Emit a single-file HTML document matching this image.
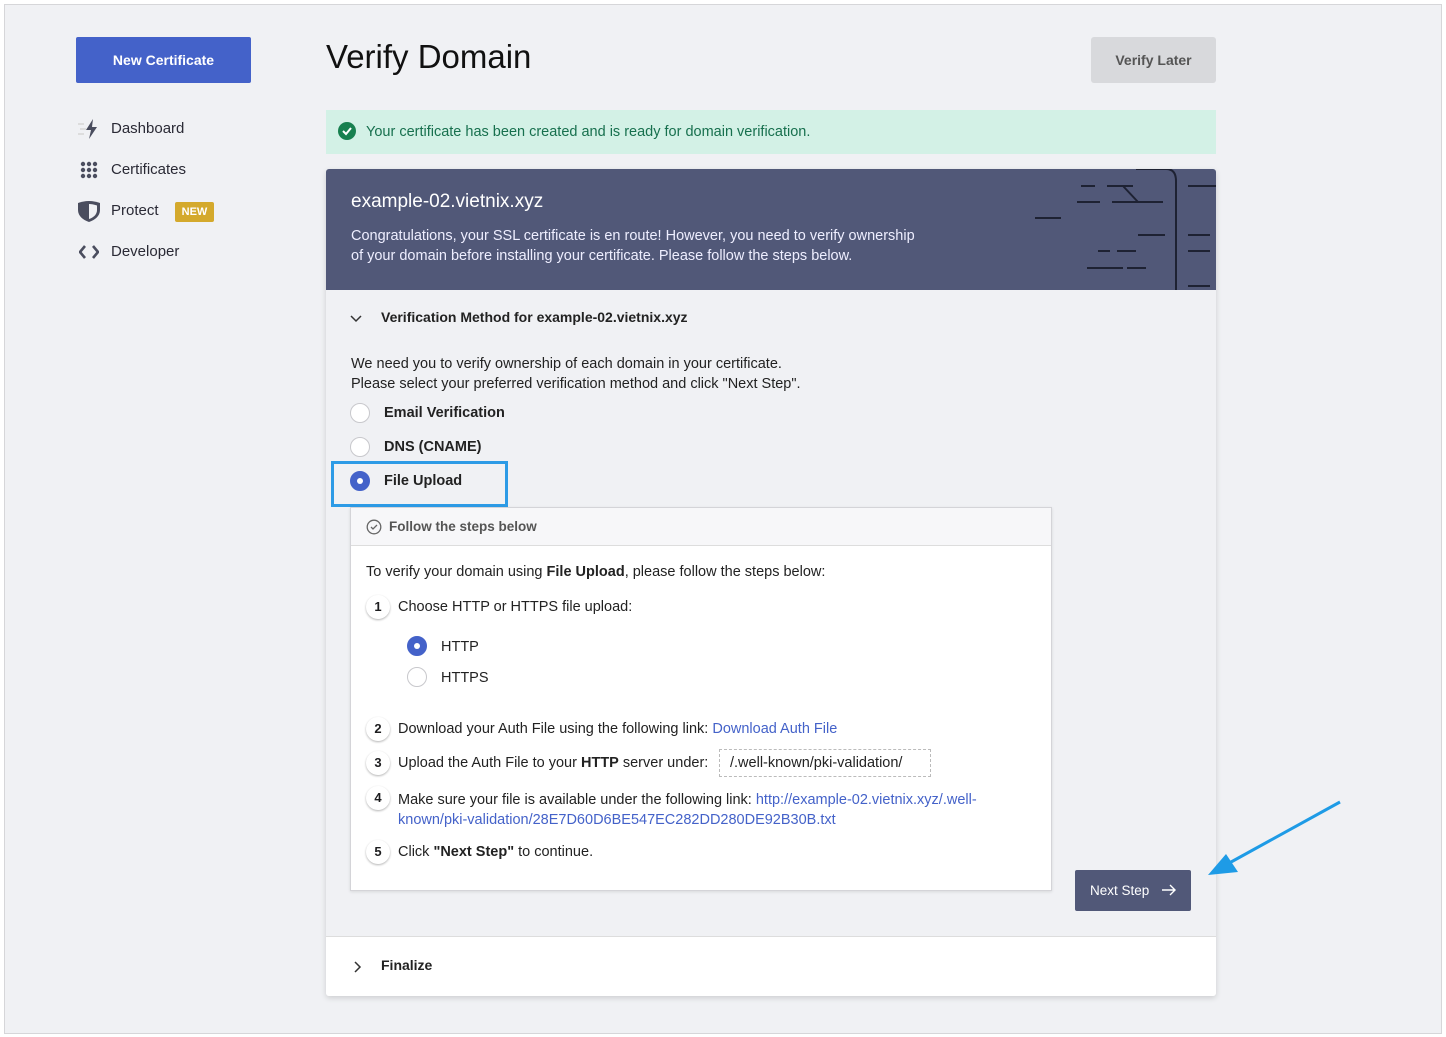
<!DOCTYPE html>
<html><head><meta charset="utf-8"><style>
*{box-sizing:border-box;margin:0;padding:0}
body{width:1446px;height:1037px;background:#fff;font-family:"Liberation Sans",sans-serif;color:#1d1d1f;position:relative;overflow:hidden}
.frame{position:absolute;left:4px;top:4px;width:1438px;height:1030px;background:#f0f1f4;border:1px solid #d6d6d9}
.a{position:absolute}
.btn1{left:76px;top:37px;width:175px;height:46px;background:#4462c9;color:#fff;font-weight:bold;font-size:14px;border-radius:2px;text-align:center;line-height:46px}
.nav{left:111px;font-size:15px;color:#2a2a35}
h1{position:absolute;left:326px;top:38px;font-size:33px;font-weight:normal;color:#111}
.vl{left:1091px;top:37px;width:125px;height:46px;background:#d8d9dc;color:#555;border-radius:3px;font-weight:bold;font-size:14px;text-align:center;line-height:46px}
.ok{left:326px;top:110px;width:890px;height:44px;background:#d3f1e6;color:#17704e;font-size:14.5px;line-height:44px;padding-left:40px}
.card{left:326px;top:169px;width:890px;height:827px;background:#f0f1f4;box-shadow:0 2px 6px rgba(0,0,0,.15);border-radius:3px;overflow:hidden}
.hd{position:absolute;left:0;top:0;width:890px;height:121px;background:#515878;color:#fff}
.fin{position:absolute;left:0;top:767px;width:890px;height:60px;background:#fff;border-top:1px solid #ddd}
.t{font-size:14.5px;color:#222}
.radio{position:absolute;width:20px;height:20px;border-radius:50%;background:#fff;border:1px solid #c8c8cc}
.radio.on{background:#4462c9;border-color:#4462c9}
.radio.on:after{content:"";position:absolute;left:6px;top:6px;width:6px;height:6px;border-radius:50%;background:#fff}
.box{left:350px;top:507px;width:702px;height:384px;background:#fff;border:1px solid #d4d4d8;box-shadow:0 1px 3px rgba(0,0,0,.1)}
.bh{height:38px;background:#f7f7f9;border-bottom:1px solid #ddd;font-size:13.5px;color:#555;font-weight:bold;line-height:37px;padding-left:38px;position:relative}
.n{position:absolute;left:366px;width:24px;height:24px;border-radius:50%;background:#fff;box-shadow:0 1px 2px rgba(0,0,0,.3);font-size:13px;font-weight:bold;text-align:center;line-height:24px}
.lk{color:#4462c9}
</style></head><body>
<div class="frame"></div>
<div class="a btn1">New Certificate</div>
<svg class="a" style="left:78px;top:119px" width="24" height="20" viewBox="0 0 24 20"><path d="M0 5h6M2 10h6M0 15h6" stroke="#ddd" stroke-width="2"/><path d="M15 0L8 11h5l-2 9 8-12h-5z" fill="#4a4d5e"/></svg>
<div class="a nav" style="top:120px">Dashboard</div>
<svg class="a" style="left:80px;top:161px" width="19" height="19"><g fill="#4a4d5e"><circle cx="3" cy="3" r="2.2"/><circle cx="9" cy="3" r="2.2"/><circle cx="15" cy="3" r="2.2"/><circle cx="3" cy="9" r="2.2"/><circle cx="9" cy="9" r="2.2"/><circle cx="15" cy="9" r="2.2"/><circle cx="3" cy="15" r="2.2"/><circle cx="9" cy="15" r="2.2"/><circle cx="15" cy="15" r="2.2"/></g></svg>
<div class="a nav" style="top:161px">Certificates</div>
<svg class="a" style="left:77px;top:200px" width="24" height="23" viewBox="0 0 24 23"><path d="M12 1C8 1 4 2 1 3v7c0 6 5 10 11 12 6-2 11-6 11-12V3c-3-1-7-2-11-2z" fill="#4a4d5e"/><path d="M12 4c2.5 0 5 .5 8 1.5V10c0 4-3 7.5-8 9z" fill="#f0f1f4"/></svg>
<div class="a nav" style="top:202px">Protect</div>
<div class="a" style="left:175px;top:202px;width:39px;height:20px;background:#d4a92c;color:#fff;font-size:11px;font-weight:bold;border-radius:2px;text-align:center;line-height:20px">NEW</div>
<svg class="a" style="left:79px;top:244px" width="20" height="16"><path d="M6 2L1 8l5 6M14 2l5 6-5 6" stroke="#4a4d5e" stroke-width="2.6" fill="none"/></svg>
<div class="a nav" style="top:243px">Developer</div>
<h1>Verify Domain</h1>
<div class="a vl">Verify Later</div>
<div class="a ok">Your certificate has been created and is ready for domain verification.</div>
<svg class="a" style="left:337px;top:121px" width="20" height="20"><circle cx="10" cy="10" r="9" fill="#17804f"/><path d="M6 10l3 3 5-6" stroke="#fff" stroke-width="2" fill="none"/></svg>
<div class="a card">
 <div class="hd">
  <div class="a" style="left:25px;top:22px;font-size:19px">example-02.vietnix.xyz</div>
  <div class="a" style="left:25px;top:57px;font-size:14.5px;line-height:20px;color:#eef">Congratulations, your SSL certificate is en route! However, you need to verify ownership<br>of your domain before installing your certificate. Please follow the steps below.</div>
  <svg class="a" style="left:700px;top:0" width="190" height="121"><g stroke="#1e2233" stroke-width="2" fill="none"><path d="M110 0h30q10 0 10 12v109"/><path d="M55 17h14M81 17h26M97 17l15 16M51 33h23M86 33h23M96 33h41M9 49h26M112 66h27M72 82h12M91 82h19M61 99h36M101 99h19M162 17h28M162 66h22M162 82h22M162 117h22"/></g></svg>
 </div>
 <svg class="a" style="left:24px;top:144px" width="12" height="10"><path d="M1 3l5 5 5-5" stroke="#333" stroke-width="1.5" fill="none"/></svg>
 <div class="a t" style="left:55px;top:140px;font-weight:bold;font-size:14px">Verification Method for example-02.vietnix.xyz</div>
 <div class="a t" style="left:25px;top:185px;line-height:20px">We need you to verify ownership of each domain in your certificate.<br>Please select your preferred verification method and click "Next Step".</div>
 <div class="radio" style="left:24px;top:234px"></div><div class="a t" style="left:58px;top:236px;font-weight:bold">Email Verification</div>
 <div class="radio" style="left:24px;top:268px"></div><div class="a t" style="left:58px;top:270px;font-weight:bold">DNS (CNAME)</div>
 <div class="a" style="left:5px;top:292px;width:177px;height:46px;border:3px solid #2d9be6"></div>
 <div class="radio on" style="left:24px;top:302px"></div><div class="a t" style="left:58px;top:304px;font-weight:bold">File Upload</div>
 <div class="a" style="left:749px;top:701px;width:116px;height:41px;background:#515878;color:#fff;border-radius:2px;font-size:13.5px;line-height:41px;padding-left:15px">Next Step<svg class="a" style="left:86px;top:14px" width="16" height="12"><path d="M1 6h13M9 1l5 5-5 5" stroke="#fff" stroke-width="1.4" fill="none"/></svg></div>
 <div class="fin"><svg class="a" style="left:26px;top:24px" width="10" height="12"><path d="M3 1l5 5-5 5" stroke="#333" stroke-width="1.5" fill="none"/></svg><div class="a t" style="left:55px;top:20px;font-weight:bold;font-size:14px">Finalize</div></div>
</div>
<div class="a box"><div class="bh"><svg class="a" style="left:15px;top:11px" width="16" height="16"><circle cx="8" cy="8" r="6.8" stroke="#666" stroke-width="1.3" fill="none"/><path d="M5 8l2 2 4-4" stroke="#666" stroke-width="1.3" fill="none"/></svg>Follow the steps below</div></div>
<div class="a t" style="left:366px;top:564px">To verify your domain using <b>File Upload</b>, please follow the steps below:</div>
<div class="n" style="top:595px">1</div><div class="a t" style="left:398px;top:599px">Choose HTTP or HTTPS file upload:</div>
<div class="radio on" style="left:407px;top:636px"></div><div class="a t" style="left:441px;top:639px">HTTP</div>
<div class="radio" style="left:407px;top:667px"></div><div class="a t" style="left:441px;top:670px">HTTPS</div>
<div class="n" style="top:717px">2</div><div class="a t" style="left:398px;top:721px">Download your Auth File using the following link: <span class="lk">Download Auth File</span></div>
<div class="n" style="top:751px">3</div><div class="a t" style="left:398px;top:755px">Upload the Auth File to your <b>HTTP</b> server under:</div>
<div class="a t" style="left:719px;top:749px;width:212px;height:28px;border:1px dashed #bbb;line-height:26px;padding-left:10px">/.well-known/pki-validation/</div>
<div class="n" style="top:786px">4</div><div class="a t" style="left:398px;top:790px;line-height:20px">Make sure your file is available under the following link: <span class="lk">http://example-02.vietnix.xyz/.well-<br>known/pki-validation/28E7D60D6BE547EC282DD280DE92B30B.txt</span></div>
<div class="n" style="top:840px">5</div><div class="a t" style="left:398px;top:844px">Click <b>"Next Step"</b> to continue.</div>
<svg class="a" style="left:1200px;top:795px" width="145" height="85"><path d="M140 7L22 72" stroke="#1e9be6" stroke-width="3"/><path d="M8 80l30-3-12-18z" fill="#1e9be6"/></svg>
</body></html>
